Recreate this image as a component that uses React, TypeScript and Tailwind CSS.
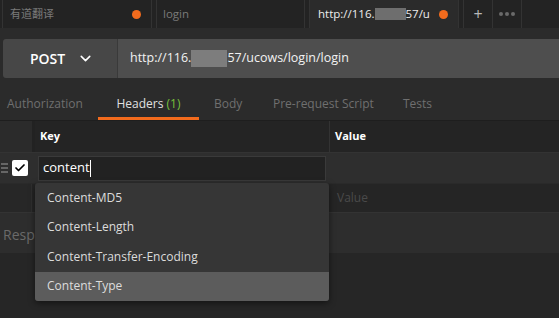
import { ChevronDown, Check } from 'lucide-react'

const font = { fontFamily: '"Open Sans", "Noto Sans CJK SC", sans-serif' }

const Dot = () => <span className="w-[9px] h-[9px] rounded-full bg-[#f26b1d] shrink-0" />

export default function App() {
    return (
        <div className="w-[559px] h-[318px] bg-[#262626] overflow-hidden text-[12px] relative" style={font}>
            {/* tab bar */}
            <div className="flex h-[28px] bg-[#232323] text-[11.5px]">
                <div className="w-[3px] border-r border-[#333]" />
                <div className="w-[149px] flex items-center justify-between pl-[7px] pr-[10px] text-[#7a7a7a] border-r border-[#333]">
                    <span className="text-[11px]">有道翻译</span>
                    <Dot />
                </div>
                <div className="w-[5px] border-r border-[#333]" />
                <div className="w-[148px] flex items-center pl-[6px] text-[#7a7a7a] border-r border-[#333]">login</div>
                <div className="w-[5px] border-r border-[#333]" />
                <div className="w-[148px] flex items-center justify-between pl-[8px] pr-[10px] bg-[#2b2b2b] text-[#ededed]">
                    <span className="w-[112px] overflow-hidden flex items-center whitespace-nowrap">
                        http://116.<span className="inline-block shrink-0 w-[31px] h-[12px] bg-[#6e6e6e]" />57/uc
                    </span>
                    <Dot />
                </div>
                <div className="w-[6px] border-l border-r border-[#333]" />
                <div className="w-[29px] flex items-center justify-center text-[#b8b8b8] text-[16px] leading-none border-r border-[#333]">+</div>
                <div className="w-[29px] flex items-center justify-center gap-[2px] border-r border-[#333]">
                    <span className="w-[4px] h-[4px] rounded-full bg-[#6a6a6a]" />
                    <span className="w-[4px] h-[4px] rounded-full bg-[#6a6a6a]" />
                    <span className="w-[4px] h-[4px] rounded-full bg-[#6a6a6a]" />
                </div>
                <div className="flex-1" />
            </div>

            {/* request bar */}
            <div className="bg-[#2b2b2b] pt-[11px] pl-[3px]">
                <div className="flex h-[39px]">
                    <div className="w-[115px] flex items-center justify-center gap-[12px] pl-[4px] bg-[#474747] rounded-l-[3px] border-r border-[#3a3a3a] text-white font-semibold text-[14px]">
                        POST
                        <ChevronDown size={17} strokeWidth={2.2} />
                    </div>
                    <div className="flex-1 flex items-center pl-[12px] bg-[#4e4e4e] text-[#f2f2f2] text-[12.5px]">
                        http://116.<span className="inline-block w-[36px] h-[17px] bg-[#7d7d7d]" />57/ucows/login/login
                    </div>
                </div>

                {/* sub tabs */}
                <div className="flex h-[42px] items-end text-[#6f6f6f]">
                    <div className="pl-[4px] w-[95px] h-[32px] flex items-center pb-[1px]">Authorization</div>
                    <div className="w-[101px] h-[32px] flex items-center justify-center pt-[2px] border-b-[3px] border-[#f26b1d] text-[#e0e0e0]">
                        <span>
                            Headers <span className="text-[#77c13a]">(1)</span>
                        </span>
                    </div>
                    <div className="pl-[15px] w-[74px] h-[32px] flex items-center pb-[1px]">Body</div>
                    <div className="w-[130px] h-[32px] flex items-center pb-[1px]">Pre-request Script</div>
                    <div className="h-[32px] flex items-center pb-[1px]">Tests</div>
                </div>
            </div>

            {/* headers table */}
            <div className="border-t border-[#1e1e1e]">
                <div className="flex h-[31px] bg-[#242424] text-[11px] font-bold text-white">
                    <div className="w-[35px] bg-[#2b2b2b] border-r-[3px] border-[#222]" />
                    <div className="w-[295px] flex items-center pl-[5px] border-r border-[#333]">Key</div>
                    <div className="flex-1 flex items-center pl-[5px]">Value</div>
                </div>
                <div className="flex h-[31px] bg-[#2e2e2e] items-center border-t border-[#333]">
                    <div className="w-[38px] flex items-center pl-[1px] gap-[4px]">
                        <span className="flex flex-col gap-[2px]">
                            <span className="w-[7px] h-[2px] bg-[#666]" />
                            <span className="w-[7px] h-[2px] bg-[#666]" />
                            <span className="w-[7px] h-[2px] bg-[#666]" />
                        </span>
                        <span className="w-[16px] h-[16px] bg-white rounded-[2px] flex items-center justify-center">
                            <Check size={12} strokeWidth={3.5} className="text-black" />
                        </span>
                    </div>
                    <div className="w-[288px] h-[25px] flex items-center pl-[4px] bg-[#222] border border-[#3a3a3a] text-white text-[13px]">
                        content<span className="w-[1px] h-[17px] bg-white" />
                    </div>
                </div>
                <div className="flex h-[29px] bg-[#252525] border-t border-[#2a2a2a]">
                    <div className="w-[32px] bg-[#272727] border-r border-[#2f2f2f]" />
                    <div className="w-[298px]" />
                    <div className="flex-1 flex items-center pl-[7px] text-[#4a4a4a]">Value</div>
                </div>
                <div className="flex h-[41px] bg-[#2d2d2d] border-t border-[#333] items-center pl-[3px] pt-[3px] text-[#6a6a6a] text-[14px]">
                    Response
                </div>
            </div>

            {/* autocomplete dropdown */}
            <div className="absolute left-[35px] top-[183px] w-[294px] bg-[#363636] rounded-[3px] shadow-[0_2px_6px_rgba(0,0,0,0.5)] overflow-hidden text-[#dcdcdc]">
                <div className="h-[29.5px] flex items-center pl-[12px]">Content-MD5</div>
                <div className="h-[29.5px] flex items-center pl-[12px]">Content-Length</div>
                <div className="h-[29.5px] flex items-center pl-[12px]">Content-Transfer-Encoding</div>
                <div className="h-[29.5px] flex items-center pl-[12px] bg-[#5c5c5c]">Content-Type</div>
            </div>
        </div>
    )
}
